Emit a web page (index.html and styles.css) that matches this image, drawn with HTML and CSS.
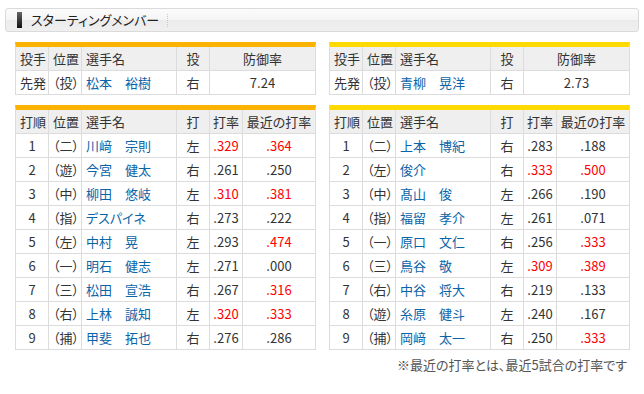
FILE: index.html
```html
<!DOCTYPE html>
<html lang="ja">
<head>
<meta charset="utf-8">
<link rel="stylesheet" href="styles.css">
</head>
<body>
<div class="title-bar">
  <span class="mark"></span>
  <h2 class="title">スターティングメンバー</h2>
  <span class="sep"></span>
</div>

<div class="teams">
  <section class="team team-orange">
    <div class="grid pitcher">
      <div class="th">投手</div><div class="th">位置</div><div class="th">選手名</div><div class="th c">投</div><div class="th c">防御率</div>
      <div class="td">先発</div><div class="td">（投）</div><div class="td name">松本　裕樹</div><div class="td c">右</div><div class="td c">7.24</div>
    </div>
    <div class="grid lineup">
      <div class="th">打順</div><div class="th">位置</div><div class="th">選手名</div><div class="th c">打</div><div class="th c">打率</div><div class="th c">最近の打率</div>
      <div class="td c">1</div><div class="td">（二）</div><div class="td name">川﨑　宗則</div><div class="td c">左</div><div class="td c red">.329</div><div class="td c red">.364</div>
      <div class="td c">2</div><div class="td">（遊）</div><div class="td name">今宮　健太</div><div class="td c">右</div><div class="td c">.261</div><div class="td c">.250</div>
      <div class="td c">3</div><div class="td">（中）</div><div class="td name">柳田　悠岐</div><div class="td c">左</div><div class="td c red">.310</div><div class="td c red">.381</div>
      <div class="td c">4</div><div class="td">（指）</div><div class="td name">デスパイネ</div><div class="td c">右</div><div class="td c">.273</div><div class="td c">.222</div>
      <div class="td c">5</div><div class="td">（左）</div><div class="td name">中村　晃</div><div class="td c">左</div><div class="td c">.293</div><div class="td c red">.474</div>
      <div class="td c">6</div><div class="td">（一）</div><div class="td name">明石　健志</div><div class="td c">左</div><div class="td c">.271</div><div class="td c">.000</div>
      <div class="td c">7</div><div class="td">（三）</div><div class="td name">松田　宣浩</div><div class="td c">右</div><div class="td c">.267</div><div class="td c red">.316</div>
      <div class="td c">8</div><div class="td">（右）</div><div class="td name">上林　誠知</div><div class="td c">左</div><div class="td c red">.320</div><div class="td c red">.333</div>
      <div class="td c">9</div><div class="td">（捕）</div><div class="td name">甲斐　拓也</div><div class="td c">右</div><div class="td c">.276</div><div class="td c">.286</div>
    </div>
  </section>

  <section class="team team-yellow">
    <div class="grid pitcher">
      <div class="th">投手</div><div class="th">位置</div><div class="th">選手名</div><div class="th c">投</div><div class="th c">防御率</div>
      <div class="td">先発</div><div class="td">（投）</div><div class="td name">青柳　晃洋</div><div class="td c">右</div><div class="td c">2.73</div>
    </div>
    <div class="grid lineup">
      <div class="th">打順</div><div class="th">位置</div><div class="th">選手名</div><div class="th c">打</div><div class="th c">打率</div><div class="th c">最近の打率</div>
      <div class="td c">1</div><div class="td">（二）</div><div class="td name">上本　博紀</div><div class="td c">右</div><div class="td c">.283</div><div class="td c">.188</div>
      <div class="td c">2</div><div class="td">（左）</div><div class="td name">俊介</div><div class="td c">右</div><div class="td c red">.333</div><div class="td c red">.500</div>
      <div class="td c">3</div><div class="td">（中）</div><div class="td name">髙山　俊</div><div class="td c">左</div><div class="td c">.266</div><div class="td c">.190</div>
      <div class="td c">4</div><div class="td">（指）</div><div class="td name">福留　孝介</div><div class="td c">左</div><div class="td c">.261</div><div class="td c">.071</div>
      <div class="td c">5</div><div class="td">（一）</div><div class="td name">原口　文仁</div><div class="td c">右</div><div class="td c">.256</div><div class="td c red">.333</div>
      <div class="td c">6</div><div class="td">（三）</div><div class="td name">鳥谷　敬</div><div class="td c">左</div><div class="td c red">.309</div><div class="td c red">.389</div>
      <div class="td c">7</div><div class="td">（右）</div><div class="td name">中谷　将大</div><div class="td c">右</div><div class="td c">.219</div><div class="td c">.133</div>
      <div class="td c">8</div><div class="td">（遊）</div><div class="td name">糸原　健斗</div><div class="td c">左</div><div class="td c">.240</div><div class="td c">.167</div>
      <div class="td c">9</div><div class="td">（捕）</div><div class="td name">岡﨑　太一</div><div class="td c">右</div><div class="td c">.250</div><div class="td c red">.333</div>
    </div>
  </section>
</div>

<p class="note">※最近の打率とは、最近5試合の打率です</p>
</body>
</html>
```

FILE: styles.css
```css
html, body {
  margin: 0;
  padding: 0;
  background: #fff;
}
body {
  width: 644px;
  height: 394px;
  overflow: hidden;
  font-family: "Noto Sans CJK JP", "Liberation Sans", sans-serif;
  font-feature-settings: "palt";
  color: #333;
}

.title-bar {
  margin: 8px 5px 0 5px;
  height: 22px;
  border: 1px solid #dadada;
  border-radius: 3px;
  background: linear-gradient(#fbfbfb 0%, #f5f5f5 50%, #ebebeb 51%, #f0f0f0 100%);
  display: flex;
  align-items: center;
  padding-left: 11px;
}
.mark {
  width: 5px;
  height: 16px;
  background: linear-gradient(#666, #111);
}
.title {
  margin: 0 0 0 9px;
  font-size: 13px;
  font-weight: normal;
  color: #222;
  line-height: 22px;
}
.sep {
  margin-left: 8px;
  height: 13px;
  border-left: 1px dotted #c8c8c8;
}

.teams {
  display: flex;
  gap: 13px;
  margin-top: 10px;
  padding-left: 15px;
}
.team {
  display: flex;
  flex-direction: column;
  gap: 10px;
  width: 301px;
}

.grid {
  display: grid;
  gap: 1px;
  background: #dcdcdc;
  border: 1px solid #dcdcdc;
  border-top: 5px solid #f9b300;
  font-size: 13px;
}
.team-yellow .grid {
  border-top-color: #ffda00;
}
.pitcher {
  grid-template-columns: 32px 32px 94px 32px 105px;
}
.lineup {
  grid-template-columns: 32px 32px 94px 32px 32px 72px;
}
.th, .td {
  height: 23px;
  line-height: 23px;
  background: #fff;
  padding: 0 0 0 4px;
  white-space: nowrap;
  overflow: hidden;
}
.th {
  background: #efefef;
  color: #333;
}
.td {
  color: #333;
}
.c {
  text-align: center;
  padding: 0;
}
.name {
  color: #0a64a8;
}
.red {
  color: #ff0000;
}

.note {
  margin: 5px 17px 0 0;
  text-align: right;
  font-size: 13px;
  color: #555;
}
```
